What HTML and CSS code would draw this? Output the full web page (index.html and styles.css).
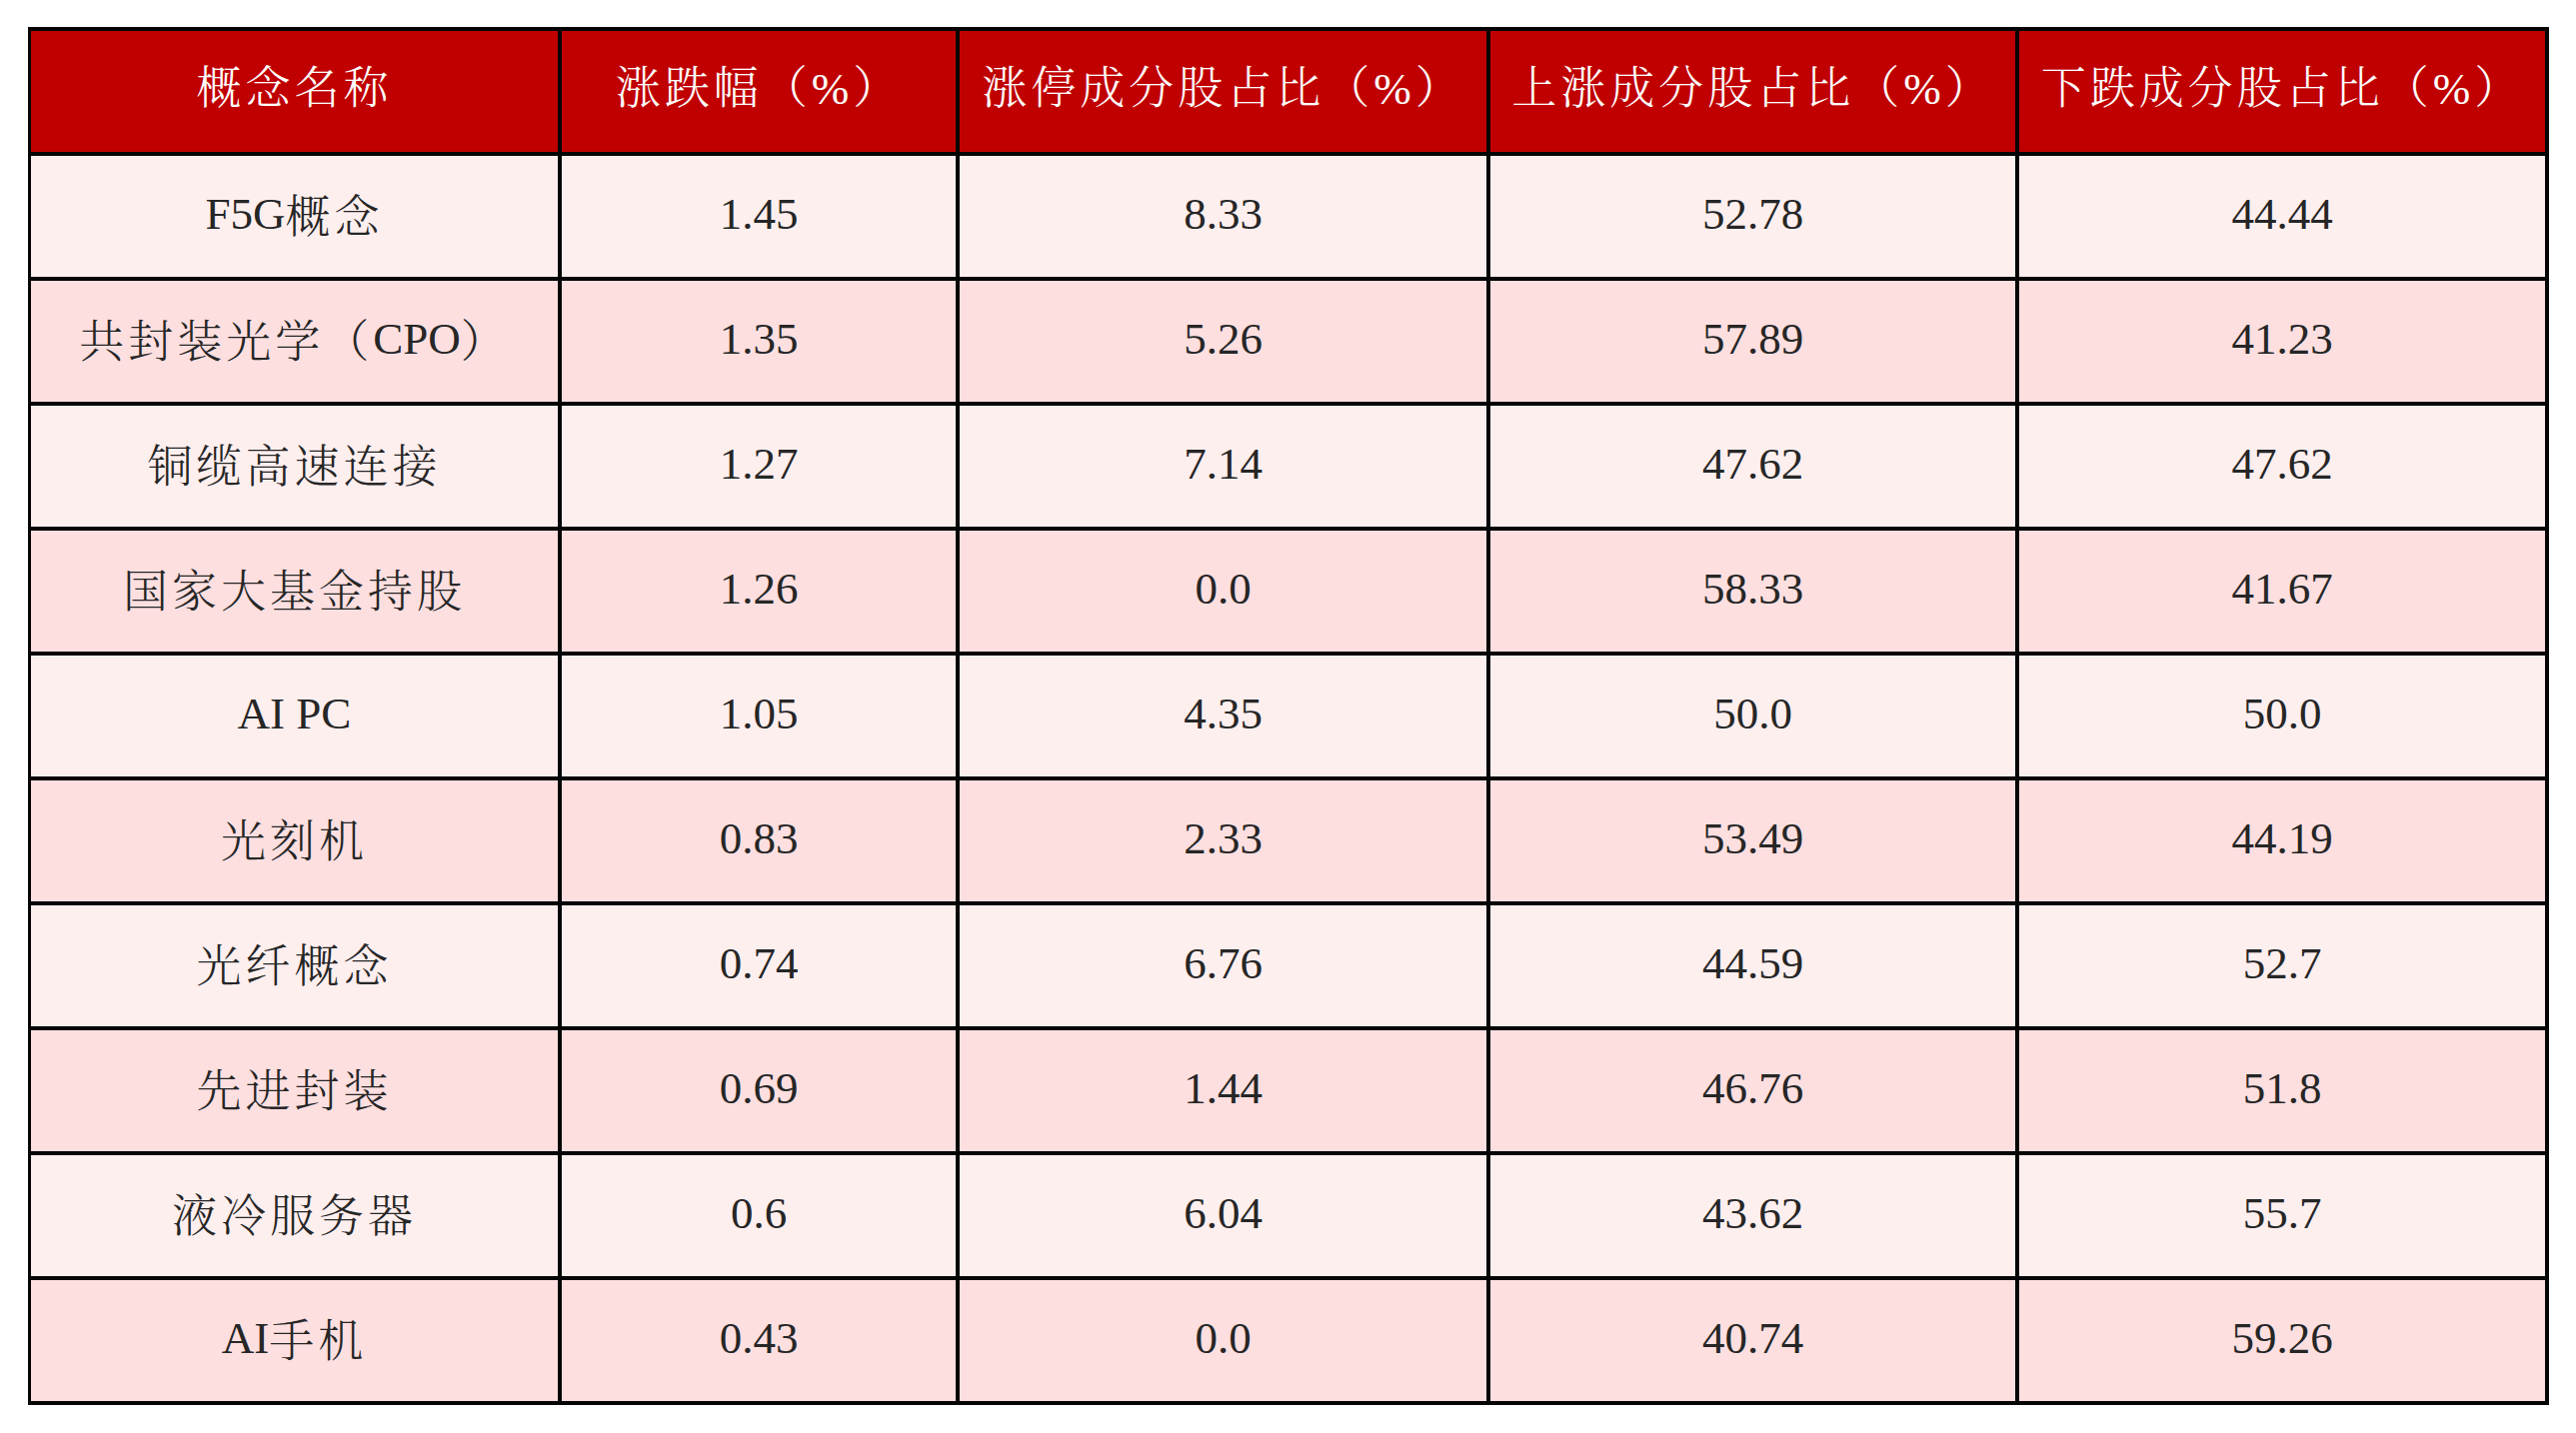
FILE: index.html
```html
<!DOCTYPE html>
<html lang="zh-CN">
<head>
<meta charset="utf-8">
<title>概念板块表现</title>
<link rel="stylesheet" href="styles.css">
</head>
<body>
<div class="sheet">
  <div class="row head">
    <div class="cell cjk">概念名称</div>
    <div class="cell cjk">涨跌幅（%）</div>
    <div class="cell cjk">涨停成分股占比（%）</div>
    <div class="cell cjk">上涨成分股占比（%）</div>
    <div class="cell cjk">下跌成分股占比（%）</div>
  </div>
  <div class="row light">
    <div class="cell cjk"><span class="lat">F5G</span>概念</div><div class="cell">1.45</div><div class="cell">8.33</div><div class="cell">52.78</div><div class="cell">44.44</div>
  </div>
  <div class="row dark">
    <div class="cell cjk">共封装光学（<span class="lat">CPO</span>）</div><div class="cell">1.35</div><div class="cell">5.26</div><div class="cell">57.89</div><div class="cell">41.23</div>
  </div>
  <div class="row light">
    <div class="cell cjk">铜缆高速连接</div><div class="cell">1.27</div><div class="cell">7.14</div><div class="cell">47.62</div><div class="cell">47.62</div>
  </div>
  <div class="row dark">
    <div class="cell cjk">国家大基金持股</div><div class="cell">1.26</div><div class="cell">0.0</div><div class="cell">58.33</div><div class="cell">41.67</div>
  </div>
  <div class="row light">
    <div class="cell">AI PC</div><div class="cell">1.05</div><div class="cell">4.35</div><div class="cell">50.0</div><div class="cell">50.0</div>
  </div>
  <div class="row dark">
    <div class="cell cjk">光刻机</div><div class="cell">0.83</div><div class="cell">2.33</div><div class="cell">53.49</div><div class="cell">44.19</div>
  </div>
  <div class="row light">
    <div class="cell cjk">光纤概念</div><div class="cell">0.74</div><div class="cell">6.76</div><div class="cell">44.59</div><div class="cell">52.7</div>
  </div>
  <div class="row dark">
    <div class="cell cjk">先进封装</div><div class="cell">0.69</div><div class="cell">1.44</div><div class="cell">46.76</div><div class="cell">51.8</div>
  </div>
  <div class="row light">
    <div class="cell cjk">液冷服务器</div><div class="cell">0.6</div><div class="cell">6.04</div><div class="cell">43.62</div><div class="cell">55.7</div>
  </div>
  <div class="row dark">
    <div class="cell cjk"><span class="lat">AI</span>手机</div><div class="cell">0.43</div><div class="cell">0.0</div><div class="cell">40.74</div><div class="cell">59.26</div>
  </div>
</div>
</body>
</html>
```
FILE: styles.css
```css
html, body {
  margin: 0;
  background: #ffffff;
}
body {
  padding: 27px 0 0 28px;
  font-family: "Liberation Serif", "Noto Serif CJK SC", "Noto Sans CJK SC", serif;
  color: #262626;
}
.sheet {
  width: 2522px;
  box-sizing: border-box;
  border-top: 4px solid #050505;
  border-left: 3px solid #050505;
  display: flex;
  flex-direction: column;
}
.row {
  display: grid;
  grid-template-columns: 531px 398px 531px 529px 530px;
}
.row.head { background: #c00000; color: #ffffff; }
.row.light { background: #feefef; }
.row.dark { background: #fddfe0; }
.cell {
  box-sizing: border-box;
  height: 125px;
  padding-bottom: 6px;
  border-right: 4px solid #050505;
  border-bottom: 4px solid #050505;
  display: flex;
  align-items: center;
  justify-content: center;
  font-size: 45px;
  font-weight: 400;
  white-space: nowrap;
}
.row.head .cell {
  padding-bottom: 14px;
}
.cjk {
  letter-spacing: 4px;
  font-weight: 300;
}
.lat {
  letter-spacing: 0;
  font-weight: 400;
}
```
